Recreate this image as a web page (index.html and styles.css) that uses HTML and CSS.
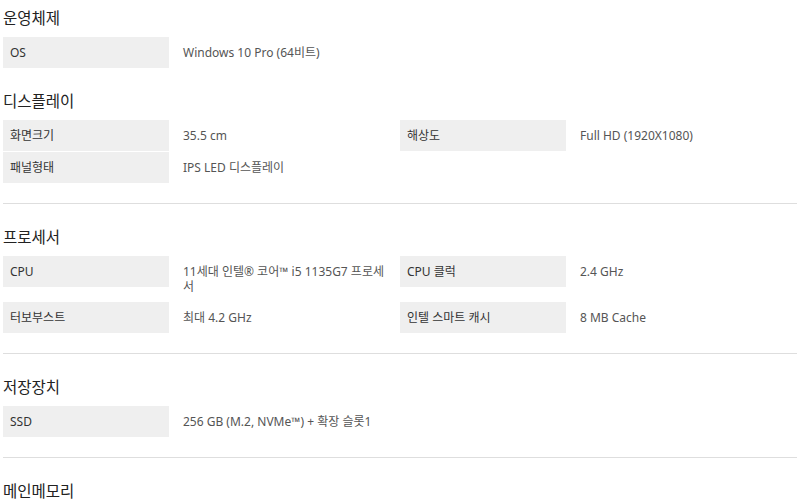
FILE: index.html
```html
<!DOCTYPE html>
<html lang="ko">
<head>
<meta charset="utf-8">
<link rel="stylesheet" href="styles.css">
</head>
<body>
<div class="specs">
  <section class="group">
    <h3 class="group-title">운영체제</h3>
    <div class="row">
      <div class="label">OS</div>
      <div class="value">Windows 10 Pro (64비트)</div>
    </div>
  </section>
  <section class="group divided">
    <h3 class="group-title">디스플레이</h3>
    <div class="row">
      <div class="label">화면크기</div>
      <div class="value">35.5 cm</div>
      <div class="label">해상도</div>
      <div class="value">Full HD (1920X1080)</div>
    </div>
    <div class="row">
      <div class="label">패널형태</div>
      <div class="value">IPS LED 디스플레이</div>
    </div>
  </section>
  <section class="group divided">
    <h3 class="group-title">프로세서</h3>
    <div class="row">
      <div class="label">CPU</div>
      <div class="value">11세대 인텔® 코어™ i5 1135G7 프로세서</div>
      <div class="label">CPU 클럭</div>
      <div class="value">2.4 GHz</div>
    </div>
    <div class="row">
      <div class="label">터보부스트</div>
      <div class="value">최대 4.2 GHz</div>
      <div class="label">인텔 스마트 캐시</div>
      <div class="value">8 MB Cache</div>
    </div>
  </section>
  <section class="group divided">
    <h3 class="group-title">저장장치</h3>
    <div class="row">
      <div class="label">SSD</div>
      <div class="value">256 GB (M.2, NVMe™) + 확장 슬롯1</div>
    </div>
  </section>
  <section class="group">
    <h3 class="group-title">메인메모리</h3>
  </section>
</div>
</body>
</html>
```

FILE: styles.css
```css
html, body {
  margin: 0;
  padding: 0;
  background: #fff;
}
body {
  font-family: "Noto Sans", "Noto Sans CJK KR", sans-serif;
  color: #333;
  overflow: hidden;
}
.specs {
  padding: 5px 3px 0 3px;
}
.group {
  padding-bottom: 19px;
}
.group.divided {
  border-bottom: 1px solid #dedede;
  margin-bottom: 20px;
}
.group-title {
  margin: 0 0 8px 0;
  font-size: 15.5px;
  line-height: 24px;
  font-weight: normal;
  color: #222;
  font-family: "Noto Sans CJK KR", sans-serif;
}
.row {
  display: grid;
  grid-template-columns: 166px 231px 166px 231px;
  align-items: start;
}
.label {
  background: #efefef;
  border-bottom: 1px solid #fff;
  padding: 8px 7px;
  font-size: 12px;
  line-height: 15px;
  color: #333;
}
.value {
  padding: 8px 14px;
  font-size: 12px;
  line-height: 15px;
  color: #555;
}
```
